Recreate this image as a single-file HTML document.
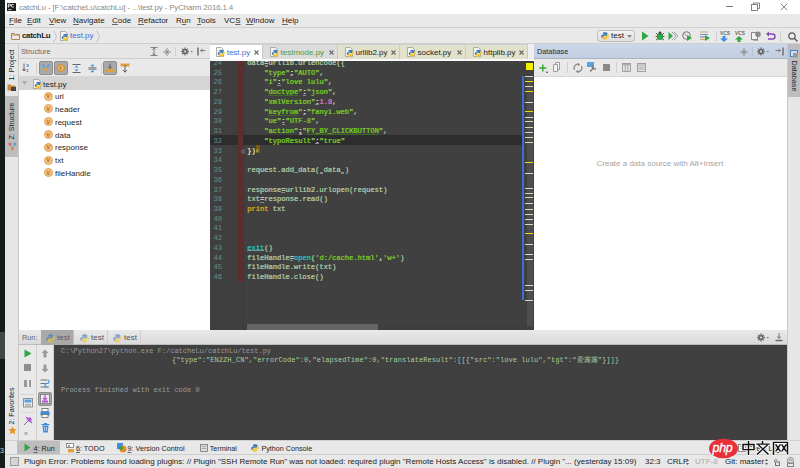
<!DOCTYPE html>
<html><head><meta charset="utf-8">
<style>
*{margin:0;padding:0;box-sizing:border-box}
html,body{width:800px;height:468px;overflow:hidden;background:#e8e8e8;font-family:"Liberation Sans",sans-serif;font-size:8px;color:#222}
.a{position:absolute}
.t{position:absolute;white-space:pre;line-height:10px}
.mono{font-family:"Liberation Mono",monospace}
u{text-decoration:underline #666 0.6px;text-underline-offset:1px}
#leftdark{left:0;top:0;width:5px;height:468px;background:#141d1b}
#title{left:5px;top:0;width:795px;height:14px;background:#fff}
#menu{left:5px;top:14px;width:795px;height:13px;background:#e9e9e9}
#nav{left:5px;top:27px;width:795px;height:17px;background:#e9e9e9;border-top:1px solid #d0d0d0;border-bottom:1px solid #cfcfcf}
#ltool{left:5px;top:44px;width:14px;height:396px;background:#e6e6e6;border-right:1px solid #c9c9c9}
#struct{left:19px;top:44px;width:191px;height:286px;background:#fff}
#editor{left:210px;top:44px;width:324px;height:286px;background:#e8e8e8}
#db{left:534px;top:44px;width:253px;height:286px;background:#fff}
#rtool{left:787px;top:44px;width:13px;height:410px;background:#e6e6e6;border-left:1px solid #c9c9c9}
#run{left:19px;top:330px;width:768px;height:110px;background:#e8e8e8}
#btool{left:5px;top:440px;width:795px;height:14px;background:#e8e8e8;border-top:1px solid #cfcfcf}
#status{left:5px;top:454px;width:795px;height:14px;background:#e8e8e8;border-top:1px solid #cfcfcf}
.vico{width:9px;height:9px;border-radius:50%;background:#f4bf7c;border:1px solid #e3a35a}
.vico::after{content:"v";position:absolute;left:1.6px;top:-1.5px;font-size:6.5px;color:#8a5a20;line-height:9px}

.ln{position:absolute;left:0;width:12px;text-align:right;font-family:"Liberation Mono",monospace;font-size:7px;line-height:9.74px;color:#6a8e8e}
.cl{position:absolute;left:37px;white-space:pre;font-family:"Liberation Mono",monospace;font-size:7.08px;line-height:9.74px;color:#a8c09e;font-weight:normal;text-shadow:0.4px 0 currentColor}
.cl span{position:relative}
.cl .s{color:#76c626}.cl .su{color:#76c626}.cl .su::after{content:"";position:absolute;left:0;right:0;bottom:0.3px;height:0.8px;background:#3f6a2a}.cl .q{color:#8ccc4a}.cl .n{color:#d07ac8}.cl .k{color:#d9a21c}.cl .b{color:#28bcb8}.cl .bu{color:#28bcb8}.cl .bu::after{content:"";position:absolute;left:0;right:0;bottom:1px;height:1px;background:#6a9aa0}
.cl .c{color:#e4e4e4}.cl .c::after,.cl .ws::after{content:"";position:absolute;left:0.5px;right:0.5px;bottom:0.5px;height:1.2px;background:#8a8a8a}.cl .ws{color:#d0d0d0}.cl .y{color:#d4e0b0}.cl .w{background:#7a5e10;color:#cfc080;top:-1.5px}
.co{position:absolute;white-space:pre;font-family:"Liberation Mono",monospace;font-size:7px;line-height:9.7px;font-weight:normal}
.menu span{position:absolute;top:2px;color:#1b1b1b}
</style></head><body>
<svg width="0" height="0" style="position:absolute">
<defs>
<symbol id="py" viewBox="0 0 8 8"><path d="M3.8 0.3c-1.6 0-1.8 0.7-1.8 1.2v0.9h2v0.4H1.3C0.6 2.8 0.2 3.4 0.2 4.3c0 1 .4 1.6 1.1 1.6h.8V4.9c0-.7.6-1.2 1.3-1.2h2c.6 0 1.1-.5 1.1-1.1V1.5C6.5 0.8 5.600 0.3 3.8 0.3z" fill="#3c7ab8"/><path d="M4.2 7.7c1.6 0 1.800-.7 1.800-1.200V5.6h-2v-.4h2.700c.7 0 1.100-.6 1.100-1.500 0-1-.4-1.600-1.100-1.600h-.8v1c0 .7-.6 1.200-1.300 1.200h-2c-.6 0-1.100.5-1.100 1.100v1.100c0 .7.9 1.200 2.700 1.200z" fill="#f2c531"/></symbol>
<symbol id="pyf" viewBox="0 0 9 10"><path d="M0.5 0.5h5l2 2v7h-7z" fill="#f4f4f4" stroke="#9a9a9a" stroke-width="0.8"/><svg x="1.5" y="2.5" width="7.5" height="7.5" viewBox="0 0 8 8"><use href="#py"/></svg></symbol>
</defs></svg>
<div class="a" id="leftdark"></div><div class="a" style="left:0;top:332px;width:5px;height:27px;background:#3e4846"></div><div class="t" style="left:0;top:447px;font-size:7px;color:#ccc;line-height:8px;width:5px;overflow:hidden">3</div>
<!-- TITLE -->
<div class="a" id="title">
  <svg class="a" style="left:2px;top:3px" width="9" height="8" viewBox="0 0 9 8"><rect width="9" height="8" fill="#1c1c1c"/><path d="M1.3 4.6V1.2h1.5a0.9 0.9 0 0 1 0 1.8H1.3M6.8 1.4H5.2a0.7 0.7 0 0 0-0.7 0.7v1.2a0.7 0.7 0 0 0 0.7 0.7h1.6" fill="none" stroke="#fff" stroke-width="0.9"/><path d="M1.2 6.6h3.2" stroke="#fff" stroke-width="0.8"/></svg>
  <div class="t" style="left:14px;top:2.7px;color:#8a8a8a;font-size:8px;letter-spacing:-0.17px">catchLu - [F:\catcheLu\catchLu] - ...\test.py - PyCharm 2016.1.4</div>
  <div class="a" style="left:720.5px;top:6px;width:7px;height:1px;background:#777"></div>
  <svg class="a" style="left:746px;top:2px" width="9" height="9"><path d="M2.5 2.5V1h6v5.5H7" fill="none" stroke="#777" stroke-width="0.9"/><rect x="0.5" y="2.5" width="6" height="6" fill="none" stroke="#777" stroke-width="0.9"/></svg>
  <svg class="a" style="left:775px;top:2.5px" width="8" height="8"><path d="M0.8 0.8l6.4 6.4M7.2 0.8l-6.4 6.4" stroke="#777" stroke-width="0.9"/></svg>
</div>
<!-- MENU -->
<div class="a menu" id="menu">
  <span style="left:4px"><u>F</u>ile</span>
  <span style="left:22px"><u>E</u>dit</span>
  <span style="left:44px"><u>V</u>iew</span>
  <span style="left:68px"><u>N</u>avigate</span>
  <span style="left:107px"><u>C</u>ode</span>
  <span style="left:133px"><u>R</u>efactor</span>
  <span style="left:171px">R<u>u</u>n</span>
  <span style="left:192px"><u>T</u>ools</span>
  <span style="left:219px">VC<u>S</u></span>
  <span style="left:241px"><u>W</u>indow</span>
  <span style="left:277px"><u>H</u>elp</span>
</div>
<!-- NAV -->
<div class="a" id="nav">
  <svg class="a" style="left:6px;top:5px" width="9" height="7" viewBox="0 0 9 7"><path d="M0.5 0.5h3l1 1h4v5h-8z" fill="none" stroke="#b5894e" stroke-width="1"/><path d="M0.5 2h8" stroke="#b5894e" stroke-width="1"/></svg>
  <div class="t" style="left:17px;top:3px;font-weight:bold;color:#1d1d1d;font-size:8px;letter-spacing:-0.35px">catchLu</div>
  <svg class="a" style="left:48px;top:2px" width="4" height="13" viewBox="0 0 4 13"><path d="M0.5 0.5L3.5 6.5L0.5 12.5" fill="none" stroke="#b8b8b8" stroke-width="0.8"/></svg>
  <svg class="a" style="left:55px;top:3px" width="9" height="10"><use href="#pyf"/></svg>
  <div class="t" style="left:65px;top:3px;color:#3d6fd6;font-size:8px">test.py</div>
  <svg class="a" style="left:91px;top:2px" width="4" height="13" viewBox="0 0 4 13"><path d="M0.5 0.5L3.5 6.5L0.5 12.5" fill="none" stroke="#b8b8b8" stroke-width="0.8"/></svg>
  <!-- combobox -->
  <div class="a" style="left:592px;top:2px;width:38px;height:12px;border:1px solid #bdbdbd;border-radius:3px;background:linear-gradient(#f4f4f4,#dedede)"></div>
  <svg class="a" style="left:596px;top:4px" width="8" height="8"><use href="#py"/></svg>
  <div class="t" style="left:606px;top:3px;color:#222;font-size:8px">test</div>
  <svg class="a" style="left:622px;top:7px" width="5" height="3"><path d="M0 0h5l-2.5 3z" fill="#888"/></svg>
  <!-- run -->
  <svg class="a" style="left:636px;top:3px" width="8" height="10"><path d="M1 0.5L7.5 5L1 9.5z" fill="#2ea844"/></svg>
  <!-- debug -->
  <svg class="a" style="left:650px;top:3px" width="10" height="10"><ellipse cx="5" cy="5.5" rx="3.2" ry="3.6" fill="#2ea844"/><path d="M1 2l2 2M9 2l-2 2M0.5 5.5h2M7.5 5.5h2M1 9l2-1.5M9 9l-2-1.5" stroke="#444" stroke-width="0.8"/><circle cx="5" cy="2" r="1.4" fill="#444"/></svg>
  <!-- coverage -->
  <svg class="a" style="left:663px;top:3px" width="10" height="10"><path d="M0.5 1L5 5L0.5 9z" fill="#2ea844"/><path d="M4 1L8 5L4 9M6 1L10 5L6 9" fill="none" stroke="#666" stroke-width="0.8" stroke-dasharray="1 0.6"/></svg>
  <!-- profile -->
  <svg class="a" style="left:677px;top:3px" width="10" height="10"><circle cx="4.5" cy="4.5" r="3.8" fill="none" stroke="#666" stroke-width="0.9"/><path d="M2.5 3l2 1.5" stroke="#666" stroke-width="0.8"/><path d="M5 4L10 7L5 10z" fill="#2ea844"/></svg>
  <!-- concurrency -->
  <svg class="a" style="left:695px;top:3px" width="10" height="10"><path d="M0 1h8M0 3.5h8M0 6h5M0 8.5h5" stroke="#e0a060" stroke-width="1.2"/><path d="M0 3.5h8M0 6h5" stroke="#6a9ad0" stroke-width="1.2"/><path d="M5 4L10 7L5 10z" fill="#2ea844"/></svg>
  <div class="a" style="left:710.5px;top:3px;width:1px;height:11px;background:#cfcfcf"></div>
  <!-- vcs update -->
  <div class="t" style="left:715px;top:2.5px;font-size:4.8px;color:#6a6a6a;font-weight:bold;line-height:5px">VCS</div>
  <svg class="a" style="left:715px;top:8px" width="8" height="6"><path d="M2.5 0h3v2.5h2.5l-4 3.5-4-3.5h2.5z" fill="#3d8ee0"/></svg>
  <div class="t" style="left:730px;top:2.5px;font-size:4.8px;color:#6a6a6a;font-weight:bold;line-height:5px">VCS</div>
  <svg class="a" style="left:730px;top:8px" width="8" height="6"><path d="M4 0l4 3.5h-2.5v2.5h-3v-2.5h-2.5z" fill="#2ea844"/></svg>
  <!-- history -->
  <svg class="a" style="left:745.5px;top:3px" width="10" height="11"><rect x="0.5" y="1.5" width="6" height="7" fill="#f4f4f4" stroke="#888"/><circle cx="7" cy="3.3" r="2.8" fill="#8a8a8a"/><path d="M2 9.5h5" stroke="#aaa"/></svg>
  <!-- revert -->
  <svg class="a" style="left:760.5px;top:3px" width="10" height="10"><path d="M2 3h4.5a2.5 2.5 0 0 1 0 5H2" fill="none" stroke="#8b47b8" stroke-width="1.4"/><path d="M0 3l3-2.5v5z" fill="#8b47b8"/></svg>
  <div class="a" style="left:775px;top:3px;width:1px;height:11px;background:#cfcfcf"></div>
  <!-- search -->
  <svg class="a" style="left:782.5px;top:3.5px" width="10" height="10"><circle cx="4" cy="4" r="3.2" fill="none" stroke="#5a5a5a" stroke-width="1.2"/><path d="M6.3 6.3L9.5 9.5" stroke="#5a5a5a" stroke-width="1.5"/></svg>
</div>
<!-- LEFT TOOL STRIP -->
<div class="a" id="ltool">
  <div class="t" style="left:-14px;top:16px;width:42px;transform:rotate(-90deg);font-size:7.3px;color:#222;text-align:center;line-height:10px">1: Project</div>
  <svg class="a" style="left:2px;top:39px" width="9" height="8"><path d="M0.5 1.5h3l1 1h4v5h-8z" fill="#c8893a"/><rect x="4" y="4" width="5" height="4" fill="#444"/></svg>
  <div class="a" style="left:0;top:52px;width:13px;height:61px;background:#bdbdbd"></div>
  <div class="t" style="left:-17px;top:72.2px;width:48px;transform:rotate(-90deg);font-size:7.1px;color:#222;text-align:center;line-height:10px">Z: Structure</div>
  <svg class="a" style="left:2.5px;top:98px" width="9" height="9"><path d="M2 2L4.5 7L7 2" fill="none" stroke="#8899aa" stroke-width="1"/><circle cx="2" cy="2" r="1.6" fill="#e06060"/><circle cx="7" cy="2" r="1.6" fill="#5a9ae0"/><circle cx="4.5" cy="7" r="1.6" fill="#e08a40"/></svg>
  <div class="t" style="left:-18px;top:356.5px;width:50px;transform:rotate(-90deg);font-size:7.1px;color:#222;text-align:center;line-height:10px">2: Favorites</div>
  <svg class="a" style="left:2.5px;top:382px" width="9" height="9" viewBox="0 0 10 10"><path d="M5 0.3l1.4 3 3.3.3-2.5 2.2.8 3.3L5 7.4 2 9.1l.8-3.3L.3 3.6l3.3-.3z" fill="#e8962a"/></svg>
</div>
<!-- STRUCTURE -->
<div class="a" id="struct">
  <div class="a" style="left:0;top:0;width:191px;height:15px;background:#e6e6e6;border-bottom:1px solid #cdcdcd"></div>
  <div class="t" style="left:2px;top:3px;color:#666;font-size:7.3px">Structure</div>
  <svg class="a" style="left:131px;top:3px" width="8" height="9"><path d="M0.5 0.5h7M0.5 8.5h7M4 1v7M2.5 2.5L4 1L5.5 2.5M2.5 6.5L4 8L5.5 6.5" fill="none" stroke="#777" stroke-width="0.9"/></svg>
  <svg class="a" style="left:144px;top:4px" width="8" height="8"><path d="M4 0v8M0 4h8M2 2l4 4M6 2l-4 4" stroke="#8a8a8a" stroke-width="0.9"/></svg>
  <div class="a" style="left:156px;top:3px;width:1px;height:9px;background:#d0d0d0"></div>
  <svg class="a" style="left:162px;top:3px" width="12" height="9"><path d="M4 0.6v7.8M0.1 4.5h7.8M1.25 1.75l5.5 5.5M1.25 7.25l5.5-5.5" stroke="#6a6a6a" stroke-width="1.3"/><circle cx="4" cy="4.5" r="2.6" fill="#6a6a6a"/><circle cx="4" cy="4.5" r="1" fill="#e6e6e6"/><path d="M9.5 4h2.5l-1.25 1.5z" fill="#777"/></svg>
  <svg class="a" style="left:178px;top:3px" width="9" height="9"><path d="M1 0.5v8" stroke="#777" stroke-width="1.6"/><path d="M3.5 3.5h5M3.5 3.5l2-1.5M3.5 3.5l2 1.5" stroke="#777" stroke-width="0.9" fill="none"/></svg>
  <!-- toolbar -->
  <div class="a" style="left:0;top:15px;width:191px;height:18px;background:#e9e9e9;border-bottom:1px solid #d6d6d6"></div>
  <svg class="a" style="left:3px;top:19px" width="9" height="9"><path d="M2 0.5v7.5M0.3 6l1.7 2l1.7-2" fill="none" stroke="#555" stroke-width="0.9"/><text x="4.3" y="4" font-size="4.5" fill="#3c8fd8" font-family="Liberation Sans" font-weight="bold">a</text><text x="4.3" y="8.8" font-size="4.5" fill="#a050c0" font-family="Liberation Sans" font-weight="bold">z</text></svg>
  <div class="a" style="left:17px;top:19px;width:1px;height:11px;background:#d0d0d0"></div>
  <div class="a" style="left:20px;top:17px;width:14px;height:14px;background:#a9a9a9;border:1px solid #8e8e8e;border-radius:2px"></div>
  <svg class="a" style="left:23px;top:20px" width="8" height="8"><path d="M1.5 1.5L4 4.5L6.5 1.5" stroke="#5aa0e0" stroke-width="1" fill="none"/><circle cx="1.5" cy="1.5" r="1.2" fill="#5aa0e0"/><circle cx="6.5" cy="1.5" r="1.2" fill="#5aa0e0"/><rect x="2.5" y="4" width="3" height="3" fill="#e0a040"/></svg>
  <div class="a" style="left:35px;top:17px;width:14px;height:14px;background:#a9a9a9;border:1px solid #8e8e8e;border-radius:2px"></div>
  <div class="a" style="left:38px;top:20px;width:8px;height:8px;border-radius:50%;background:#f3b25a;border:0.8px solid #d08a30"></div>
  <div class="t" style="left:40.5px;top:19.5px;font-size:5.5px;color:#555;line-height:8px">f</div>
  <svg class="a" style="left:53px;top:20px" width="9" height="9"><path d="M0.5 0.5h8M0.5 8.5h8" stroke="#555" stroke-width="0.9"/><path d="M4.5 1.5l-2 2h4zM4.5 7.5l-2-2h4z" fill="#3c8fd8"/></svg>
  <svg class="a" style="left:69px;top:20px" width="9" height="9"><path d="M0.5 3.8h8M0.5 5.2h8" stroke="#555" stroke-width="0.8"/><path d="M4.5 3l-2-2.2h4zM4.5 6l-2 2.2h4z" fill="#3c8fd8"/></svg>
  <div class="a" style="left:82px;top:19px;width:1px;height:11px;background:#d0d0d0"></div>
  <div class="a" style="left:84px;top:17px;width:14px;height:14px;background:#a9a9a9;border:1px solid #8e8e8e;border-radius:2px"></div>
  <svg class="a" style="left:86px;top:19px" width="10" height="10"><path d="M5 0.5v5M3 3.5l2 2l2-2" stroke="#555" stroke-width="0.9" fill="none"/><path d="M0.5 6h9v3h-9z" fill="#e0a040"/></svg>
  <svg class="a" style="left:101px;top:19px" width="10" height="10"><path d="M0.5 0.5h9v3h-9z" fill="#e0a040"/><path d="M5 2v7.5M3 7l2 2l2-2" stroke="#555" stroke-width="0.9" fill="none"/></svg>
  <!-- tree -->
  <div class="a" style="left:0;top:33px;width:191px;height:13px;background:#d5d5d5"></div>
  <svg class="a" style="left:3px;top:37px" width="5" height="4"><path d="M0 0h5l-2.5 4z" fill="#aaa"/></svg>
  <svg class="a" style="left:14px;top:35px" width="9" height="10"><use href="#pyf"/></svg>
  <div class="t" style="left:24px;top:35.5px;color:#1e1e1e">test.py</div>
<div class="a vico" style="left:25px;top:47.6px"></div><div class="t" style="left:36px;top:48.1px;color:#1e1e1e">url</div>
<div class="a vico" style="left:25px;top:60.4px"></div><div class="t" style="left:36px;top:60.9px;color:#1e1e1e">header</div>
<div class="a vico" style="left:25px;top:73.2px"></div><div class="t" style="left:36px;top:73.7px;color:#1e1e1e">request</div>
<div class="a vico" style="left:25px;top:86.0px"></div><div class="t" style="left:36px;top:86.5px;color:#1e1e1e">data</div>
<div class="a vico" style="left:25px;top:98.8px"></div><div class="t" style="left:36px;top:99.3px;color:#1e1e1e">response</div>
<div class="a vico" style="left:25px;top:111.6px"></div><div class="t" style="left:36px;top:112.1px;color:#1e1e1e">txt</div>
<div class="a vico" style="left:25px;top:124.4px"></div><div class="t" style="left:36px;top:124.9px;color:#1e1e1e">fileHandle</div>
</div>
<!-- EDITOR -->
<div class="a" id="editor">
  <div class="a" style="left:0;top:0;width:324px;height:17px;background:#efefef"></div>
  <div class="a" style="left:0px;top:0;width:53px;height:17px;background:#fff;border-right:1px solid #c8c8c8;border-top:1px solid #cfcfcf"></div><svg class="a" style="left:6.0px;top:3px" width="9" height="10"><use href="#pyf"/></svg><div class="t" style="left:16.7px;top:3.5px;color:#3d6fd6">test.py</div><svg class="a" style="left:44px;top:5.5px" width="5" height="5"><path d="M0.5 0.5l4 4M4.5 0.5l-4 4" stroke="#6a6a6a" stroke-width="1.1"/></svg><div class="a" style="left:53px;top:0;width:75px;height:17px;background:#dcdcdc;border-right:1px solid #c8c8c8;border-top:1px solid #cfcfcf"></div><svg class="a" style="left:60.0px;top:3px" width="9" height="10"><use href="#pyf"/></svg><div class="t" style="left:70.5px;top:3.5px;color:#4e9a3a">testmode.py</div><svg class="a" style="left:119px;top:5.5px" width="5" height="5"><path d="M0.5 0.5l4 4M4.5 0.5l-4 4" stroke="#6a6a6a" stroke-width="1.1"/></svg><div class="a" style="left:128px;top:0;width:62px;height:17px;background:#e2e1cc;border-right:1px solid #c8c8c8;border-top:1px solid #cfcfcf"></div><svg class="a" style="left:135.0px;top:3px" width="9" height="10"><use href="#pyf"/></svg><div class="t" style="left:145.5px;top:3.5px;color:#222">urllib2.py</div><svg class="a" style="left:181px;top:5.5px" width="5" height="5"><path d="M0.5 0.5l4 4M4.5 0.5l-4 4" stroke="#6a6a6a" stroke-width="1.1"/></svg><div class="a" style="left:190px;top:0;width:66px;height:17px;background:#e2e1cc;border-right:1px solid #c8c8c8;border-top:1px solid #cfcfcf"></div><svg class="a" style="left:197.0px;top:3px" width="9" height="10"><use href="#pyf"/></svg><div class="t" style="left:207.5px;top:3.5px;color:#222">socket.py</div><svg class="a" style="left:247px;top:5.5px" width="5" height="5"><path d="M0.5 0.5l4 4M4.5 0.5l-4 4" stroke="#6a6a6a" stroke-width="1.1"/></svg><div class="a" style="left:256px;top:0;width:62px;height:17px;background:#e2e1cc;border-right:1px solid #c8c8c8;border-top:1px solid #cfcfcf"></div><svg class="a" style="left:263.0px;top:3px" width="9" height="10"><use href="#pyf"/></svg><div class="t" style="left:273.5px;top:3.5px;color:#222">httplib.py</div><svg class="a" style="left:309px;top:5.5px" width="5" height="5"><path d="M0.5 0.5l4 4M4.5 0.5l-4 4" stroke="#6a6a6a" stroke-width="1.1"/></svg>
  <div class="a" style="left:0;top:15px;width:324px;height:2px;background:#fafafa"></div>
  <div class="a" style="left:0;top:17px;width:324px;height:269px;background:#404040;overflow:hidden">
    <div class="a" style="left:0;top:0;width:34px;height:269px;background:#3f3f3f;border-right:1px solid #3a3a3a"></div>
    <div class="a" style="left:0;top:74px;width:312px;height:10px;background:#2d2d2d"></div>
    <div class="a" style="left:28px;top:0;width:5px;height:220.5px;background:#5c2e2e"></div>
    <div class="a" style="left:31px;top:88px;width:4px;height:5px;border-radius:2.5px 0 0 2.5px;background:#5c5c5c"></div>
    <div class="a" style="left:34px;top:263px;width:283px;height:6px;background:#3e3e3e"></div><div class="a" style="left:37px;top:263px;width:131px;height:6px;background:#646464"></div>
    <div class="a" style="left:316.5px;top:15px;width:6.5px;height:250px;background:#4e4e4e"></div>
    <div class="a" style="left:312.2px;top:15px;width:1.8px;height:224px;background:#3d6dd0"></div>
    <div class="a" style="left:316px;top:1.5px;width:7px;height:7px;background:#f5ef00"></div>
  </div>
  <div class="a" style="left:0;top:17px;width:324px;height:269px;overflow:hidden">
  <div class="ln" style="top:-1.99px">24</div>
<div class="cl" style="top:-1.99px"><span class="d">data</span><span class="c">=</span><span class="d">urllib.urlencode({</span></div>
<div class="ln" style="top:7.74px">25</div>
<div class="cl" style="top:7.74px"><span class="d">    </span><span class="q">&quot;</span><span class="s">type</span><span class="q">&quot;</span><span class="c">:</span><span class="q">&quot;</span><span class="s">AUTO</span><span class="q">&quot;</span><span class="d">,</span></div>
<div class="ln" style="top:17.47px">26</div>
<div class="cl" style="top:17.47px"><span class="d">    </span><span class="q">&quot;</span><span class="s">i</span><span class="q">&quot;</span><span class="c">:</span><span class="q">&quot;</span><span class="s">love lulu</span><span class="q">&quot;</span><span class="d">,</span></div>
<div class="ln" style="top:27.20px">27</div>
<div class="cl" style="top:27.20px"><span class="d">    </span><span class="q">&quot;</span><span class="su">doctype</span><span class="q">&quot;</span><span class="c">:</span><span class="q">&quot;</span><span class="s">json</span><span class="q">&quot;</span><span class="d">,</span></div>
<div class="ln" style="top:36.93px">28</div>
<div class="cl" style="top:36.93px"><span class="d">    </span><span class="q">&quot;</span><span class="s">xmlVersion</span><span class="q">&quot;</span><span class="c">:</span><span class="n">1.8</span><span class="d">,</span></div>
<div class="ln" style="top:46.66px">29</div>
<div class="cl" style="top:46.66px"><span class="d">    </span><span class="q">&quot;</span><span class="su">keyfrom</span><span class="q">&quot;</span><span class="c">:</span><span class="q">&quot;</span><span class="s">fanyi.web</span><span class="q">&quot;</span><span class="d">,</span></div>
<div class="ln" style="top:56.39px">30</div>
<div class="cl" style="top:56.39px"><span class="d">    </span><span class="q">&quot;</span><span class="s">ue</span><span class="q">&quot;</span><span class="c">:</span><span class="q">&quot;</span><span class="s">UTF-8</span><span class="q">&quot;</span><span class="d">,</span></div>
<div class="ln" style="top:66.12px">31</div>
<div class="cl" style="top:66.12px"><span class="d">    </span><span class="q">&quot;</span><span class="s">action</span><span class="q">&quot;</span><span class="c">:</span><span class="q">&quot;</span><span class="su">FY_BY_CLICKBUTTON</span><span class="q">&quot;</span><span class="d">,</span></div>
<div class="ln" style="top:75.84px">32</div>
<div class="cl" style="top:75.84px"><span class="d">    </span><span class="q">&quot;</span><span class="s">typoResult</span><span class="q">&quot;</span><span class="c">:</span><span class="q">&quot;</span><span class="s">true</span><span class="q">&quot;</span></div>
<div class="ln" style="top:85.58px">33</div>
<div class="cl" style="top:85.58px"><span class="y">})</span><span class="w">,</span></div>
<div class="ln" style="top:95.31px">34</div>
<div class="ln" style="top:105.04px">35</div>
<div class="cl" style="top:105.04px"><span class="d">request.add_data(</span><span class="ws"> </span><span class="d">data</span><span class="ws"> </span><span class="d">)</span></div>
<div class="ln" style="top:114.76px">36</div>
<div class="ln" style="top:124.50px">37</div>
<div class="cl" style="top:124.50px"><span class="d">response</span><span class="c">=</span><span class="d">urllib2.urlopen(request)</span></div>
<div class="ln" style="top:134.23px">38</div>
<div class="cl" style="top:134.23px"><span class="d">txt</span><span class="c">=</span><span class="d">response.read()</span></div>
<div class="ln" style="top:143.95px">39</div>
<div class="cl" style="top:143.95px"><span class="k">print</span><span class="d"> txt</span></div>
<div class="ln" style="top:153.69px">40</div>
<div class="ln" style="top:163.42px">41</div>
<div class="ln" style="top:173.14px">42</div>
<div class="ln" style="top:182.88px">43</div>
<div class="cl" style="top:182.88px"><span class="bu">exit</span><span class="d">()</span></div>
<div class="ln" style="top:192.60px">44</div>
<div class="cl" style="top:192.60px"><span class="d">fileHandle</span><span class="c">=</span><span class="b">open</span><span class="d">(</span><span class="s">&#x27;d:/cache.html&#x27;</span><span class="ws">,</span><span class="s">&#x27;w+&#x27;</span><span class="d">)</span></div>
<div class="ln" style="top:202.33px">45</div>
<div class="cl" style="top:202.33px"><span class="d">fileHandle.write(txt)</span></div>
<div class="ln" style="top:212.07px">46</div>
<div class="cl" style="top:212.07px"><span class="d">fileHandle.close()</span></div>
<div class="a" style="left:315px;top:15px;width:8px;height:1.4px;background:#d8d8b8"></div><div class="a" style="left:315px;top:25px;width:8px;height:1.4px;background:#d8d8b8"></div><div class="a" style="left:315px;top:41px;width:8px;height:1.4px;background:#d8d8b8"></div><div class="a" style="left:315px;top:56px;width:8px;height:1.4px;background:#d8d8b8"></div><div class="a" style="left:315px;top:60px;width:8px;height:1.4px;background:#d8d8b8"></div><div class="a" style="left:315px;top:66px;width:8px;height:1.4px;background:#d8d8b8"></div><div class="a" style="left:315px;top:71px;width:8px;height:1.4px;background:#d8d8b8"></div><div class="a" style="left:315px;top:76px;width:8px;height:1.4px;background:#d8d8b8"></div><div class="a" style="left:315px;top:81px;width:8px;height:1.4px;background:#d8d8b8"></div><div class="a" style="left:315px;top:112px;width:8px;height:1.4px;background:#d8d8b8"></div><div class="a" style="left:315px;top:127px;width:8px;height:1.4px;background:#d8d8b8"></div><div class="a" style="left:315px;top:132px;width:8px;height:1.4px;background:#d8d8b8"></div><div class="a" style="left:315px;top:136px;width:8px;height:1.4px;background:#d8d8b8"></div><div class="a" style="left:315px;top:142px;width:8px;height:1.4px;background:#d8d8b8"></div><div class="a" style="left:315px;top:148px;width:8px;height:1.4px;background:#d8d8b8"></div><div class="a" style="left:315px;top:153px;width:8px;height:1.4px;background:#d8d8b8"></div><div class="a" style="left:315px;top:158px;width:8px;height:1.4px;background:#d8d8b8"></div><div class="a" style="left:315px;top:163px;width:8px;height:1.4px;background:#d8d8b8"></div><div class="a" style="left:315px;top:183px;width:8px;height:1.4px;background:#d8d8b8"></div><div class="a" style="left:315px;top:193px;width:8px;height:1.4px;background:#d8d8b8"></div><div class="a" style="left:315px;top:198px;width:8px;height:1.4px;background:#d8d8b8"></div><div class="a" style="left:315px;top:224px;width:8px;height:1.4px;background:#d8d8b8"></div><div class="a" style="left:315px;top:229px;width:8px;height:1.4px;background:#d8d8b8"></div><div class="a" style="left:315px;top:239px;width:8px;height:1.4px;background:#d8d8b8"></div><div class="a" style="left:315px;top:20px;width:8px;height:1.4px;background:#e6e000"></div><div class="a" style="left:315px;top:30px;width:8px;height:1.4px;background:#e6e000"></div><div class="a" style="left:315px;top:50px;width:8px;height:1.4px;background:#e6e000"></div><div class="a" style="left:315px;top:101px;width:8px;height:1.4px;background:#e6e000"></div><div class="a" style="left:315px;top:172px;width:8px;height:1.4px;background:#e6e000"></div>
  </div>
</div>
<div class="a" id="db">
  <div class="a" style="left:0;top:0;width:253px;height:15px;background:linear-gradient(#ccd7e9,#c3cee1);border-bottom:1px solid #a9b3c4"></div>
  <div class="t" style="left:3px;top:3px;color:#2a2a2a;font-size:7.3px">Database</div>
  <svg class="a" style="left:206px;top:4px" width="8" height="8"><path d="M4 0v8M0 4h8M2 2l4 4M6 2l-4 4" stroke="#8a8a8a" stroke-width="0.9"/></svg>
  <div class="a" style="left:218px;top:3px;width:1px;height:9px;background:#b8c2d2"></div>
  <svg class="a" style="left:223px;top:3px" width="12" height="9"><path d="M4 0.6v7.8M0.1 4.5h7.8M1.25 1.75l5.5 5.5M1.25 7.25l5.5-5.5" stroke="#6a6a6a" stroke-width="1.3"/><circle cx="4" cy="4.5" r="2.6" fill="#6a6a6a"/><circle cx="4" cy="4.5" r="1" fill="#e6e6e6"/><path d="M9.5 4h2.5l-1.25 1.5z" fill="#777"/></svg>
  <svg class="a" style="left:241px;top:3px" width="9" height="9"><path d="M8 0.5v8" stroke="#777" stroke-width="1.6"/><path d="M0.5 3.5h5M5.5 3.5l-2-1.5M5.5 3.5l-2 1.5" stroke="#777" stroke-width="0.9" fill="none"/></svg>
  <div class="a" style="left:0;top:15px;width:253px;height:18px;background:#e9e9e9;border-bottom:1px solid #d6d6d6"></div>
  <svg class="a" style="left:5px;top:20px" width="10" height="10"><path d="M3.8 0.5v7M0.3 4h7" stroke="#36a336" stroke-width="1.4"/><path d="M6.5 7.8h3l-1.5 1.5z" fill="#444"/></svg>
  <svg class="a" style="left:19px;top:18px" width="9" height="10"><path d="M2.5 0.5h4v7h-4z" fill="#f2f2f2" stroke="#888" stroke-width="0.8"/><path d="M0.5 2.5h4v7h-4z" fill="#f2f2f2" stroke="#888" stroke-width="0.8"/></svg>
  <div class="a" style="left:33px;top:18px;width:1px;height:11px;background:#d0d0d0"></div>
  <svg class="a" style="left:38.5px;top:19px" width="10" height="10"><path d="M1.6 6.8A3.8 3.8 0 0 1 5.5 1.2M8.4 3.2A3.8 3.8 0 0 1 4.5 8.8" fill="none" stroke="#8a8a8a" stroke-width="1.3"/><path d="M4.5 0l3 1.3-2.6 2z" fill="#8a8a8a"/><path d="M5.5 10l-3-1.3 2.6-2z" fill="#8a8a8a"/></svg>
  <svg class="a" style="left:53px;top:18px" width="10" height="10"><rect x="0" y="0" width="7" height="5" fill="#5aa5e0"/><path d="M3 9.5l4-4M6 3.5a2 2 0 1 0 3 3" stroke="#777" stroke-width="1.3" fill="none"/></svg>
  <div class="a" style="left:69px;top:20px;width:7px;height:7px;background:#8a8a8a"></div>
  <div class="a" style="left:82px;top:18px;width:1px;height:11px;background:#d0d0d0"></div>
  <svg class="a" style="left:87.5px;top:19px" width="9" height="9"><rect x="0.5" y="0.5" width="8" height="8" fill="#e4e4e4" stroke="#999" stroke-width="0.9"/><path d="M0.5 1.8h8M3.2 0.5v8M5.8 0.5v8" stroke="#999" stroke-width="0.8"/></svg>
  <svg class="a" style="left:103px;top:19px" width="9" height="9"><rect x="0.5" y="0.5" width="8" height="8" fill="#e4e4e4" stroke="#999" stroke-width="0.9"/><path d="M0.5 2h8" stroke="#999" stroke-width="0.8"/><rect x="1.5" y="3.5" width="6" height="3.5" fill="#c4c4c4"/></svg>
  <div class="t" style="left:62.5px;top:115px;color:#a4a4a4;font-size:8px">Create a data source with Alt+Insert</div>
</div>
<div class="a" id="rtool">
  <div class="a" style="left:0;top:0;width:13px;height:53px;background:#bdbdbd"></div>
  <svg class="a" style="left:2px;top:6px" width="9" height="8"><rect x="0.5" y="0.5" width="7" height="6" fill="#cfe0f0" stroke="#3d7fc8" stroke-width="0.9"/><rect x="3" y="3" width="5" height="4.5" fill="#999"/></svg>
  <div class="t" style="left:-11.5px;top:26.5px;width:34px;transform:rotate(90deg);font-size:7.2px;color:#222;text-align:center;line-height:10px">Database</div>
</div>
<div class="a" id="run">
  <div class="a" style="left:0;top:0;width:768px;height:15px;background:linear-gradient(#e9e9e9,#dadada);border-bottom:1px solid #bcbcbc"></div>
  <div class="t" style="left:3px;top:3.3px;color:#666;font-size:7.3px">Run:</div>
  <div class="a" style="left:22px;top:0;width:33px;height:15px;background:#a9a9a9;border-right:1px solid #c0c0c0"></div>
  <div class="a" style="left:55px;top:0;width:34px;height:15px;border-right:1px solid #cfcfcf"></div>
  <div class="a" style="left:89px;top:0;width:33px;height:15px;border-right:1px solid #cfcfcf"></div>
  <svg class="a" style="left:27px;top:3.5px;opacity:0.6" width="9" height="9"><use href="#py"/></svg>
  <div class="t" style="left:38px;top:3.3px;color:#5a5a5a">test</div>
  <svg class="a" style="left:61px;top:3.5px;opacity:0.6" width="9" height="9"><use href="#py"/></svg>
  <div class="t" style="left:72px;top:3.3px;color:#555">test</div>
  <svg class="a" style="left:94px;top:3.5px;opacity:0.6" width="9" height="9"><use href="#py"/></svg>
  <div class="t" style="left:105px;top:3.3px;color:#555">test</div>
  <svg class="a" style="left:738px;top:3px" width="12" height="9"><path d="M4 0.6v7.8M0.1 4.5h7.8M1.25 1.75l5.5 5.5M1.25 7.25l5.5-5.5" stroke="#6a6a6a" stroke-width="1.3"/><circle cx="4" cy="4.5" r="2.6" fill="#6a6a6a"/><circle cx="4" cy="4.5" r="1" fill="#e6e6e6"/><path d="M9.5 4h2.5l-1.25 1.5z" fill="#777"/></svg>
  <svg class="a" style="left:756px;top:3px" width="8" height="9"><path d="M4 0v5M2.5 3.5L4 5.5L5.5 3.5" stroke="#666" stroke-width="0.9" fill="none"/><path d="M0.5 7.5h7" stroke="#666" stroke-width="1.4"/></svg>
  <!-- left toolbars -->
  <div class="a" style="left:0;top:15px;width:18px;height:95px;background:#e9e9e9;border-right:1px solid #d0d0d0"></div>
  <div class="a" style="left:18px;top:15px;width:17px;height:95px;background:#e9e9e9;border-right:1px solid #d0d0d0"></div>
  <svg class="a" style="left:5px;top:19px" width="8" height="9"><path d="M0.5 0.5L7.5 4.5L0.5 8.5z" fill="#2ea844"/></svg>
  <div class="a" style="left:5px;top:34px;width:7px;height:7px;background:#8e8e8e"></div>
  <div class="a" style="left:5px;top:50px;width:2.5px;height:7px;background:#9a9a9a"></div>
  <div class="a" style="left:9.5px;top:50px;width:2.5px;height:7px;background:#9a9a9a"></div>
  <div class="a" style="left:2px;top:63.5px;width:13px;height:1px;background:#d6d6d6"></div><div class="a" style="left:2px;top:82px;width:13px;height:1px;background:#d6d6d6"></div>
  <svg class="a" style="left:3.5px;top:68px" width="11" height="10"><rect x="0.5" y="0.5" width="9" height="8.5" fill="#f0f0f0" stroke="#888" stroke-width="0.9"/><rect x="1.5" y="1.5" width="7" height="3" fill="#5aa0e0"/><path d="M2 6.3h6M2 7.8h6" stroke="#999" stroke-width="0.8"/></svg>
  <svg class="a" style="left:4px;top:86px" width="10" height="10"><path d="M1 9l4-4" stroke="#777" stroke-width="1"/><circle cx="6.5" cy="3.5" r="2.2" fill="#b060d0"/><path d="M3 1l6 6" stroke="#b060d0" stroke-width="1.3"/></svg>
  <div class="t" style="left:5px;top:100px;color:#777;font-size:7px;line-height:8px">»</div>
  <svg class="a" style="left:22px;top:19px" width="8" height="9"><path d="M4 0.5L0.5 4h2v4.5h3V4h2z" fill="#9a9a9a"/></svg>
  <svg class="a" style="left:22px;top:34px" width="8" height="9"><path d="M4 8.5L0.5 5h2V0.5h3V5h2z" fill="#9a9a9a"/></svg>
  <svg class="a" style="left:21px;top:49px" width="11" height="10"><path d="M0.5 1h7M0.5 4.5h5M0.5 8h7" stroke="#666" stroke-width="0.9"/><path d="M8 1a2 2 0 0 1 0 3.5H6M6 4.5a2 2 0 0 0 0 3.5h3" stroke="#3d8ee0" stroke-width="1.1" fill="none"/></svg>
  <div class="a" style="left:19px;top:62px;width:14px;height:14px;background:#a9a9a9;border:1px solid #8e8e8e;border-radius:2px"></div>
  <svg class="a" style="left:21px;top:64px" width="10" height="10"><rect x="0.5" y="0.5" width="9" height="9" fill="#eee" stroke="#777" stroke-width="0.8"/><path d="M5 1v5M3 4l2 2l2-2" stroke="#b050d0" stroke-width="1.2" fill="none"/><rect x="2" y="6.5" width="6" height="2" fill="#b050d0"/></svg>
  <svg class="a" style="left:21px;top:78px" width="10" height="10"><rect x="2" y="0.5" width="6" height="3" fill="#fff" stroke="#666" stroke-width="0.8"/><rect x="0.5" y="3.5" width="9" height="4" fill="#3d8ee0"/><rect x="2" y="6.5" width="6" height="3" fill="#fff" stroke="#666" stroke-width="0.8"/></svg>
  <svg class="a" style="left:22px;top:93px" width="9" height="10"><path d="M0.5 1.5h8M3 0.5h3" stroke="#3d8ee0" stroke-width="1"/><path d="M1.5 2.5h6l-0.7 7h-4.6z" fill="#3d8ee0"/><path d="M3.5 4v4M5.5 4v4" stroke="#fff" stroke-width="0.6"/></svg>
  <!-- console -->
  <div class="a" style="left:35px;top:15px;width:733px;height:95px;background:#404040"></div>
  <div class="co" style="left:42px;top:16.8px;color:#9a9a9a">C:\Python27\python.exe F:/catcheLu/catchLu/test.py</div>
  <div class="co" style="left:153px;top:26px;color:#a8cfa0;letter-spacing:0.058px">{"type":"EN2ZH_CN","errorCode":0,"elapsedTime":0,"translateResult":[[{"src":"love lulu","tgt":"爱露露"}]]}</div>
  <div class="co" style="left:42px;top:55.7px;color:#9a9a9a">Process finished with exit code 0</div>
</div>
<div class="a" id="btool">
  <div class="a" style="left:12px;top:0;width:43px;height:14px;background:#bdbdbd"></div>
  <svg class="a" style="left:19px;top:2px" width="7" height="9"><path d="M0.5 0.5L6.5 4.5L0.5 8.5z" fill="#2ea844"/></svg>
  <div class="t" style="left:28.5px;top:2.7px;color:#222;font-size:7.2px"><u>4</u>: Run</div>
  <svg class="a" style="left:61px;top:2px" width="10" height="10"><rect x="0.5" y="0.5" width="7" height="4" fill="#fff" stroke="#777" stroke-width="0.8"/><path d="M2 6h6v3.5H2z" fill="#e0a040"/><circle cx="3" cy="3" r="1" fill="#777"/></svg>
  <div class="t" style="left:71px;top:2.7px;color:#222;font-size:7.2px"><u>6</u>: TODO</div>
  <svg class="a" style="left:112px;top:2px" width="10" height="10"><rect x="0" y="0" width="6" height="6" fill="#3d8ee0"/><circle cx="6" cy="6" r="3.5" fill="#e88a2a"/><circle cx="4" cy="5" r="2" fill="#36a336"/></svg>
  <div class="t" style="left:122.5px;top:2.7px;color:#222;font-size:7.2px"><u>9</u>: Version Control</div>
  <svg class="a" style="left:195px;top:3px" width="8" height="8"><rect x="0.5" y="0.5" width="7" height="7" fill="#ddd" stroke="#777" stroke-width="0.8"/><path d="M1.5 2.5h5M1.5 4.5h5" stroke="#888" stroke-width="0.6"/></svg>
  <div class="t" style="left:204.7px;top:2.7px;color:#222;font-size:7.2px">Terminal</div>
  <svg class="a" style="left:246px;top:2.5px" width="8" height="8"><use href="#py"/></svg>
  <div class="t" style="left:256.4px;top:2.7px;color:#222;font-size:7.2px">Python Console</div>
  <svg class="a" style="left:733px;top:3px" width="8" height="8"><rect x="0.5" y="0.5" width="7" height="7" fill="#fff" stroke="#777" stroke-width="0.8"/><path d="M2 2.5h4M2 4.5h4" stroke="#777" stroke-width="0.6"/></svg>
  <div class="t" style="left:743px;top:2.7px;color:#222;font-size:7.2px">Event Log</div>
</div>
<div class="a" id="status">
  <div class="a" style="left:5px;top:2px;width:9px;height:9px;background:#d6d6d6;border:1px solid #9a9a9a"></div>
  <div class="t" style="left:19px;top:1.5px;color:#222">Plugin Error: Problems found loading plugins: // Plugin "SSH Remote Run" was not loaded: required plugin "Remote Hosts Access" is disabled. // Plugin "... (yesterday 15:09)</div>
  <div class="t" style="left:640px;top:1.5px;color:#222">32:3</div>
  <div class="t" style="left:662px;top:1.5px;color:#222">CRLF</div><svg class="a" style="left:681px;top:3.5px" width="3" height="6"><path d="M1.5 0L3 2H0zM1.5 6L3 4H0z" fill="#555"/></svg>
  <div class="t" style="left:690px;top:1.5px;color:#aaa">UTF-8</div>
  <div class="t" style="left:720px;top:1.5px;color:#222">Git: master</div><svg class="a" style="left:759.5px;top:3.5px" width="3" height="6"><path d="M1.5 0L3 2H0zM1.5 6L3 4H0z" fill="#555"/></svg>
  <svg class="a" style="left:769px;top:4px" width="6" height="7"><rect x="1.5" y="3" width="4" height="3.5" fill="none" stroke="#666" stroke-width="0.9"/><path d="M0.5 3V1.8a1.3 1.3 0 0 1 2.6 0" fill="none" stroke="#666" stroke-width="0.8"/></svg>
  <svg class="a" style="left:781px;top:2px" width="9" height="10"><circle cx="4.5" cy="3.5" r="3" fill="none" stroke="#777" stroke-width="0.9"/><rect x="1.5" y="6" width="6" height="3.5" fill="none" stroke="#777" stroke-width="0.9"/><path d="M3 3h3" stroke="#777"/></svg>
</div>
<!-- watermark -->
<svg class="a" style="left:706px;top:436px" width="94" height="26" viewBox="0 0 94 26">
  <ellipse cx="17.5" cy="12.5" rx="14.5" ry="9.8" fill="#e8303a"/>
  <text x="6.5" y="16.3" font-family="Liberation Sans" font-style="italic" font-size="12.5" fill="#fff" stroke="#fff" stroke-width="0.3" letter-spacing="-0.3">php</text>
  <g fill="none" stroke-linecap="square" transform="translate(0 5.5) scale(1 0.86) translate(0 -5)">
   <g stroke="#fff" stroke-width="3.2">
    <path d="M37 8.5h11v6h-11zM42.5 5v15"/>
    <path d="M56.5 5v2M51 8h12M53 9.5l9 10M61 9.5l-9.5 10"/>
    <path d="M67.5 20V6h14v13.5M70 9l4 7M74 9l-4 7M76 9l4 7M80 9l-4 7"/>
   </g>
   <g stroke="#111" stroke-width="1.5">
    <path d="M37 8.5h11v6h-11zM42.5 5v15"/>
    <path d="M56.5 5v2M51 8h12M53 9.5l9 10M61 9.5l-9.5 10"/>
    <path d="M67.5 20V6h14v13.5M70 9l4 7M74 9l-4 7M76 9l4 7M80 9l-4 7"/>
   </g>
  </g>
</svg>
</body></html>
